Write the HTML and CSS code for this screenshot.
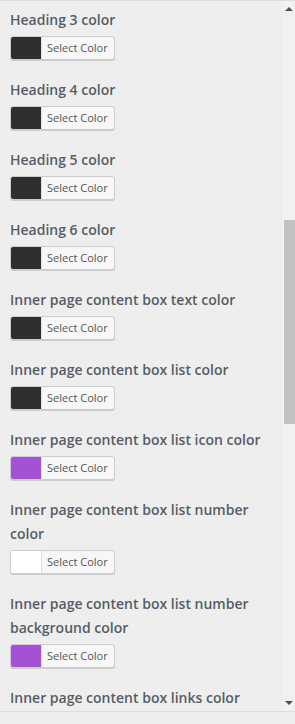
FILE: index.html
```html
<!DOCTYPE html>
<html lang="en">
<head>
    <meta charset="UTF-8">
    <meta name="viewport" content="width=device-width, initial-scale=1.0">
    <title>Customizer - Colors</title>
    <link rel="stylesheet" href="styles.css">
</head>
<body>
<div class="panel">
    <ul class="controls">
        <li class="control">
            <span class="control-title">Heading 3 color</span>
            <button class="color-button"><span class="swatch swatch-dark"></span><span class="button-text">Select Color</span></button>
        </li>
        <li class="control">
            <span class="control-title">Heading 4 color</span>
            <button class="color-button"><span class="swatch swatch-dark"></span><span class="button-text">Select Color</span></button>
        </li>
        <li class="control">
            <span class="control-title">Heading 5 color</span>
            <button class="color-button"><span class="swatch swatch-dark"></span><span class="button-text">Select Color</span></button>
        </li>
        <li class="control">
            <span class="control-title">Heading 6 color</span>
            <button class="color-button"><span class="swatch swatch-dark"></span><span class="button-text">Select Color</span></button>
        </li>
        <li class="control">
            <span class="control-title">Inner page content box text color</span>
            <button class="color-button"><span class="swatch swatch-dark"></span><span class="button-text">Select Color</span></button>
        </li>
        <li class="control">
            <span class="control-title">Inner page content box list color</span>
            <button class="color-button"><span class="swatch swatch-dark"></span><span class="button-text">Select Color</span></button>
        </li>
        <li class="control">
            <span class="control-title">Inner page content box list icon color</span>
            <button class="color-button"><span class="swatch swatch-purple"></span><span class="button-text">Select Color</span></button>
        </li>
        <li class="control">
            <span class="control-title">Inner page content box list number color</span>
            <button class="color-button"><span class="swatch swatch-white"></span><span class="button-text">Select Color</span></button>
        </li>
        <li class="control">
            <span class="control-title">Inner page content box list number background color</span>
            <button class="color-button"><span class="swatch swatch-purple"></span><span class="button-text">Select Color</span></button>
        </li>
        <li class="control">
            <span class="control-title">Inner page content box links color</span>
        </li>
    </ul>

    <div class="scrollbar">
        <span class="arrow arrow-up"></span>
        <span class="thumb"></span>
        <span class="arrow arrow-down"></span>
    </div>
</div>
</body>
</html>
```

FILE: styles.css
```css
body {
    margin: 0;
    background: #eee;
    font-family: "Open Sans", "Noto Sans", sans-serif;
    color: #555d66;
}

.panel {
    display: flex;
    height: 712px;
    box-sizing: border-box;
    border-top: 1px solid #ddd;
    border-bottom: 1px solid #ddd;
    overflow: hidden;
}

.controls {
    flex: 1;
    list-style: none;
    margin: 0;
    padding: 7px 10px 0 10px;
}

.control {
    margin-bottom: 18px;
}

.control-title {
    display: block;
    font-size: 14px;
    font-weight: 600;
    line-height: 24px;
    margin-bottom: 4px;
}

/* color picker toggle */
.color-button {
    display: flex;
    align-items: stretch;
    height: 24px;
    padding: 0;
    border: 1px solid #ccc;
    border-radius: 3px;
    background: #f7f7f7;
    box-shadow: 0 1px 0 #ccc;
    font-family: inherit;
    color: #555;
    cursor: pointer;
    overflow: hidden;
}

.swatch {
    width: 30px;
    border-right: 1px solid #ddd;
}
.swatch-dark { background: #2f2f2f; }
.swatch-purple { background: #a352d6; }
.swatch-white { background: #fff; }

.button-text {
    padding: 0 6px 0 5px;
    font-size: 11px;
    line-height: 22px;
}

/* fake scrollbar */
.scrollbar {
    width: 13px;
    background: #f1f1f1;
    display: flex;
    flex-direction: column;
    align-items: center;
}

.arrow {
    width: 0;
    height: 0;
    border-left: 4px solid transparent;
    border-right: 4px solid transparent;
}
.arrow-up {
    margin-top: 6px;
    border-bottom: 4px solid #505050;
}
.arrow-down {
    margin-top: auto;
    margin-bottom: 6px;
    border-top: 4px solid #505050;
}

.thumb {
    align-self: flex-end;
    width: 11px;
    height: 204px;
    margin-top: 209px;
    background: #c1c1c1;
}
```
